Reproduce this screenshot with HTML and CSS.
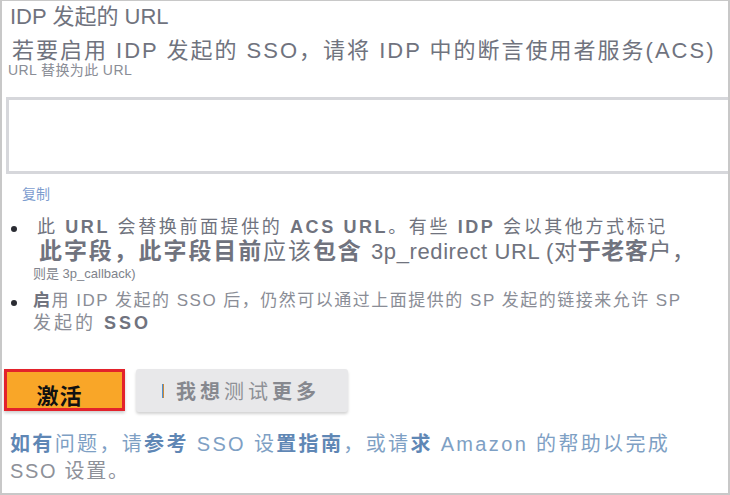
FILE: index.html
```html
<!DOCTYPE html>
<html lang="zh-CN">
<head>
<meta charset="utf-8">
<title>IDP 发起的 URL</title>
<link rel="stylesheet" href="styles.css">
</head>
<body>
<div class="frame">
  <div class="title">IDP 发起的 URL</div>
  <div class="intro">若要启用 IDP 发起的 SSO，请将 IDP 中的断言使用者服务(ACS)</div>
  <div class="intro-small">URL 替换为此 URL</div>
  <div class="url-box"></div>
  <a class="copy">复制</a>
  <ul class="notes">
    <li class="note">
      <div class="n1">此 <b>URL</b> 会替换前面提供的 <b>ACS URL</b>。有些 <b>IDP</b> 会以其他方式标记</div>
      <div class="n2"><b>此字段，此字段目前</b>应该<b>包含</b> <span class="lat">3p_redirect URL (</span><span class="tail">对<b>于老客</b>户，</span></div>
      <div class="n3">则是 3p_callback)</div>
    </li>
    <li class="note">
      <div class="m1"><b>启</b>用 IDP 发起的 SSO 后，仍然可以通过上面提供的 SP 发起的链接来允许 SP</div>
      <div class="m2">发起的 <b>SSO</b></div>
    </li>
  </ul>
  <div class="actions">
    <button class="btn-activate">激活</button>
    <button class="btn-test"><span class="caret"></span><b>我想</b>测试<b>更多</b></button>
  </div>
  <p class="help"><b>如有</b>问题，请<b>参考</b> SSO 设<b>置指南</b>，或请<b>求</b> Amazon 的帮助以完成</p>
  <p class="help-end">SSO 设置。</p>
</div>
</body>
</html>
```

FILE: styles.css
```css
html, body {
  margin: 0;
  padding: 0;
  background: #ffffff;
}

body {
  font-family: "Liberation Sans", "Noto Sans CJK SC", sans-serif;
  color: #70737e;
}

.frame {
  width: 730px;
  height: 495px;
  box-sizing: border-box;
  border: solid #c8c8c8;
  border-width: 1px 2px 2px 2px;
  overflow: hidden;
  display: flex;
  flex-direction: column;
  padding: 4px 0 0 0;
}

.title {
  font-size: 22px;
  line-height: 24px;
  height: 24px;
  padding-left: 8px;
  white-space: nowrap;
}

.intro {
  font-size: 22px;
  line-height: 24px;
  height: 24px;
  margin-top: 10px;
  padding-left: 10px;
  letter-spacing: 2px;
  white-space: nowrap;
}

.intro-small {
  font-size: 14px;
  line-height: 14px;
  height: 14px;
  padding-left: 6px;
  letter-spacing: 0.4px;
  color: #8a8d96;
  white-space: nowrap;
}

.url-box {
  margin: 20px 0 0 4px;
  height: 77px;
  width: 740px;
  box-sizing: border-box;
  border: 3px solid #d6d7db;
  background: #ffffff;
  flex: none;
}

.copy {
  display: block;
  margin: 10px 0 0 20px;
  font-size: 14px;
  line-height: 20px;
  color: #7d9dcf;
}

.notes {
  list-style: none;
  margin: 12px 0 0 0;
  padding: 0;
}

.note {
  position: relative;
  padding-left: 31px;
  white-space: nowrap;
}

.note::before {
  content: "";
  position: absolute;
  left: 9px;
  width: 6px;
  height: 6px;
  border-radius: 50%;
  background: #2a2c33;
}

.note:first-child::before {
  top: 10px;
}

.note:last-child::before {
  top: 10px;
}

.n1 {
  font-size: 18px;
  line-height: 22px;
  letter-spacing: 2.6px;
  padding-left: 4px;
}

.n1 b {
  font-weight: bold;
}

.n2 {
  font-size: 23px;
  line-height: 26px;
  letter-spacing: 1.9px;
  padding-left: 6px;
}

.n2 b {
  font-weight: bold;
}

.n2 .lat {
  font-size: 22px;
  letter-spacing: 0.6px;
}

.n2 .tail {
  letter-spacing: 0.6px;
}

.n3 {
  font-size: 13px;
  line-height: 15px;
  margin-top: 1px;
  color: #80838c;
}

.m1 {
  margin-top: 9px;
  font-size: 17px;
  line-height: 22px;
  letter-spacing: 1.5px;
  color: #8a8d96;
}

.m1 b {
  color: #70737e;
}

.m2 {
  font-size: 18px;
  line-height: 22px;
  letter-spacing: 3px;
  color: #8a8d96;
}

.m2 b {
  color: #70737e;
}

.actions {
  display: flex;
  gap: 11px;
  margin: 35px 0 0 2px;
  align-items: flex-start;
}

.btn-activate {
  width: 121px;
  height: 42px;
  box-sizing: border-box;
  background: #f9a628;
  border: 3px solid #e3222b;
  box-shadow: 0 2px 3px rgba(0, 0, 0, 0.2);
  font-family: "Liberation Sans", "Noto Sans CJK SC", sans-serif;
  font-size: 22px;
  font-weight: bold;
  color: #111111;
  padding: 6px 10px 0 0;
  letter-spacing: 1px;
}

.btn-test {
  width: 212px;
  height: 43px;
  box-sizing: border-box;
  background: #e8e8ea;
  border: none;
  border-radius: 3px;
  box-shadow: 0 2px 3px rgba(0, 0, 0, 0.18);
  font-family: "Liberation Sans", "Noto Sans CJK SC", sans-serif;
  font-size: 20px;
  color: #8e9096;
  letter-spacing: 4px;
  display: flex;
  align-items: center;
  padding: 0 0 0 26px;
}

.btn-test b {
  color: #86888f;
}

.caret {
  display: inline-block;
  width: 2px;
  height: 14px;
  background: linear-gradient(90deg, #4f8fd0 50%, #c98a3a 50%);
  margin-right: 12px;
}

.help {
  margin: 20px 0 0 0;
  padding-left: 8px;
  font-size: 20px;
  line-height: 24px;
  letter-spacing: 2.35px;
  color: #7ea0c4;
  white-space: nowrap;
}

.help b {
  color: #5f87b5;
}

.help-end {
  margin: 3px 0 0 0;
  padding-left: 8px;
  font-size: 20px;
  line-height: 24px;
  letter-spacing: 1.7px;
  color: #8e9199;
  white-space: nowrap;
}
```
